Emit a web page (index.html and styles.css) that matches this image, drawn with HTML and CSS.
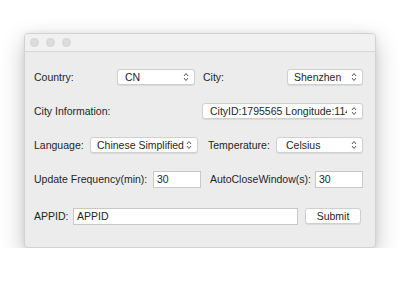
FILE: index.html
```html
<!DOCTYPE html>
<html lang="en">
<head>
    <meta charset="UTF-8">
    <title>Weather Settings</title>
    <link rel="stylesheet" href="styles.css">
</head>
<body>

    <!-- Settings Window -->
    <div class="window">
        <div class="titlebar">
            <span class="light"></span>
            <span class="light"></span>
            <span class="light"></span>
        </div>

        <div class="content">
            <div class="row">
                <span class="label w-country">Country:</span>
                <div class="select w-cn"><span>CN</span><svg class="chev" viewBox="0 0 6 10"><path d="M1 4 L3 1.5 L5 4 M1 6 L3 8.5 L5 6"/></svg></div>
                <span class="label w-city">City:</span>
                <div class="select w-shenzhen"><span>Shenzhen</span><svg class="chev" viewBox="0 0 6 10"><path d="M1 4 L3 1.5 L5 4 M1 6 L3 8.5 L5 6"/></svg></div>
            </div>

            <div class="row">
                <span class="label w-info">City Information:</span>
                <div class="select w-cityinfo"><span class="clip">CityID:1795565 Longitude:114</span><svg class="chev" viewBox="0 0 6 10"><path d="M1 4 L3 1.5 L5 4 M1 6 L3 8.5 L5 6"/></svg></div>
            </div>

            <div class="row">
                <span class="label w-lang">Language:</span>
                <div class="select w-chinese"><span>Chinese Simplified</span><svg class="chev" viewBox="0 0 6 10"><path d="M1 4 L3 1.5 L5 4 M1 6 L3 8.5 L5 6"/></svg></div>
                <span class="label w-temp">Temperature:</span>
                <div class="select w-celsius"><span>Celsius</span><svg class="chev" viewBox="0 0 6 10"><path d="M1 4 L3 1.5 L5 4 M1 6 L3 8.5 L5 6"/></svg></div>
            </div>

            <div class="row">
                <span class="label w-freq">Update Frequency(min):</span>
                <input class="field w-num" type="text" value="30">
                <span class="label w-close">AutoCloseWindow(s):</span>
                <input class="field w-num" type="text" value="30">
            </div>

            <div class="row row-app">
                <span class="label w-appid">APPID:</span>
                <input class="field w-appfield" type="text" value="APPID">
                <button class="submit-btn">Submit</button>
            </div>
        </div>
    </div>

</body>
</html>
```

FILE: styles.css
```css
/* General Reset */
* { margin: 0; padding: 0; box-sizing: border-box; }
body { font-family: 'Liberation Sans', Arial, sans-serif; font-size: 10.5px; background-color: #fff; color: #262626; padding: 33px 24px 0; }

/* Window */
.window { width: 352px; background-color: #ececec; border: 1px solid #d2d2d2; border-radius: 4px; box-shadow: 0 9px 24px rgba(0, 0, 0, 0.24), 0 0 6px rgba(0, 0, 0, 0.08); overflow: hidden; }
.titlebar { height: 18px; display: flex; align-items: center; gap: 7px; padding-left: 5px; background-color: #f1f1f1; border-bottom: 1px solid #d6d6d6; }
.light { width: 9px; height: 9px; border-radius: 50%; background-color: #dcdcdc; border: 1px solid #d4d4d4; }

/* Form rows */
.content { display: flex; flex-direction: column; gap: 12px; padding: 14px 12px 20px 9px; }
.row { display: flex; align-items: center; height: 22px; }
.row-app { margin-top: 3px; }
.label { white-space: nowrap; }

.w-country { width: 83px; }
.w-city { width: 84px; margin-left: 8px; }
.w-info { width: 168px; }
.w-lang { width: 56px; }
.w-temp { width: 68px; margin-left: 10px; }
.w-freq { width: 120px; }
.w-close { width: 106px; margin-left: 9px; }
.w-appid { width: 39px; }

/* Popup buttons */
.select { display: flex; align-items: center; justify-content: space-between; height: 16px; padding: 0 5px 0 7px; background-color: #fff; border: 1px solid #cfcfcf; border-radius: 3px; box-shadow: 0 1px 1px rgba(0, 0, 0, 0.08); overflow: hidden; }
.select span { white-space: nowrap; }
.select .clip { overflow: hidden; flex: 1; margin-right: 4px; }
.chev { width: 6px; height: 10px; flex-shrink: 0; }
.chev path { fill: none; stroke: #555; stroke-width: 1; }

.w-cn { width: 78px; }
.w-shenzhen { width: 76px; padding-left: 6px; }
.w-cityinfo { width: 161px; }
.w-chinese { width: 108px; padding-left: 6px; }
.w-celsius { width: 87px; padding-left: 9px; }

/* Text fields */
.field { height: 17px; padding: 0 3px; font-family: inherit; font-size: 10.5px; color: #262626; background-color: #fff; border: 1px solid #c8c8c8; outline: none; }
.w-num { width: 48px; }
.w-appfield { width: 225px; }

.submit-btn { width: 56px; height: 16px; margin-left: 7px; font-family: inherit; font-size: 10.5px; color: #262626; background-color: #fff; border: 1px solid #cfcfcf; border-radius: 3px; box-shadow: 0 1px 1px rgba(0, 0, 0, 0.08); cursor: pointer; }
```
